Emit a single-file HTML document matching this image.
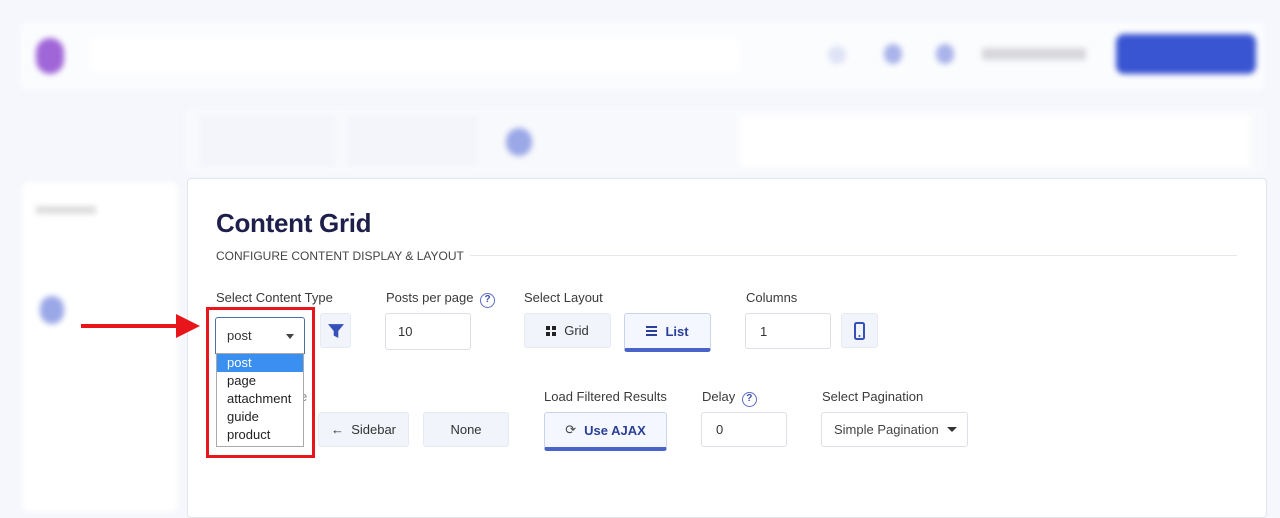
<!DOCTYPE html>
<html><head><meta charset="utf-8"><style>
*{box-sizing:border-box;margin:0;padding:0}
body{width:1280px;height:508px;overflow:hidden;background:#f5f7fc;font-family:"Liberation Sans",sans-serif;color:#333;position:relative}
.abs{position:absolute}
.blur{filter:blur(3px)}
.card{background:#fff;border-radius:6px}
.lbl{position:absolute;font-size:13px;color:#3a3a3a}
.btn{position:absolute;background:#f1f4fb;border:1px solid #e6eaf3;border-radius:3px;font-size:13px;color:#333;display:flex;align-items:center;justify-content:center;gap:8px}
.inp{position:absolute;background:#fff;border:1px solid #dcdfe6;border-radius:3px;font-size:13px;color:#333;padding-left:14px;display:flex;align-items:center}
.act{background:#f4f7ff;border:1px solid #c9d3ec;border-bottom:4px solid #4a63c8;color:#2b3f96;font-weight:bold}
</style></head><body>
<div class="abs blur" style="left:0;top:0;width:1280px;height:508px">
 <div class="abs card" style="left:20px;top:22px;width:1245px;height:68px;background:#fbfcfe"></div>
 <div class="abs card" style="left:90px;top:38px;width:650px;height:34px"></div>
 <div class="abs" style="left:36px;top:38px;width:28px;height:36px;border-radius:14px;background:#a066d8"></div>
 <div class="abs" style="left:828px;top:46px;width:18px;height:18px;border-radius:9px;background:#dfe3f6"></div>
 <div class="abs" style="left:884px;top:44px;width:18px;height:20px;border-radius:9px;background:#aab4ea"></div>
 <div class="abs" style="left:936px;top:44px;width:18px;height:20px;border-radius:9px;background:#aab4ea"></div>
 <div class="abs" style="left:982px;top:48px;width:104px;height:12px;background:#d8d8dc"></div>
 <div class="abs" style="left:1116px;top:34px;width:140px;height:40px;border-radius:8px;background:#3a55d2"></div>
 <div class="abs card" style="left:185px;top:108px;width:1080px;height:66px;background:#f8f9fc"></div>
 <div class="abs" style="left:200px;top:115px;width:135px;height:52px;background:#f3f5fa"></div>
 <div class="abs" style="left:348px;top:115px;width:130px;height:52px;background:#f3f5fa"></div>
 <div class="abs" style="left:506px;top:128px;width:26px;height:28px;border-radius:13px;background:#9aa8e8"></div>
 <div class="abs" style="left:740px;top:115px;width:510px;height:52px;background:#fff"></div>
 <div class="abs card" style="left:22px;top:182px;width:156px;height:330px"></div>
 <div class="abs" style="left:36px;top:206px;width:60px;height:8px;background:#ddd"></div>
 <div class="abs" style="left:40px;top:296px;width:24px;height:28px;border-radius:12px;background:#9aa8e8"></div>
</div>
<div class="abs" style="left:187px;top:178px;width:1080px;height:340px;background:#fff;border:1px solid #e3e5ee;border-radius:4px"></div>
<div class="abs" style="left:216px;top:208px;font-size:26px;font-weight:bold;color:#1e1f4b;letter-spacing:-0.3px">Content Grid</div>
<div class="abs" style="left:216px;top:249px;font-size:12px;color:#444">CONFIGURE CONTENT DISPLAY &amp; LAYOUT</div>
<div class="abs" style="left:470px;top:255px;width:767px;height:1px;background:#e5e7ec"></div>

<div class="lbl" style="left:216px;top:290px">Select Content Type</div>
<div class="lbl" style="left:386px;top:290px">Posts per page <span style="display:inline-block;width:15px;height:15px;border:1.5px solid #5a6cc8;border-radius:50%;color:#3b4ea8;font-size:10px;text-align:center;line-height:12px;font-weight:bold;margin-left:3px">?</span></div>
<div class="lbl" style="left:524px;top:290px">Select Layout</div>
<div class="lbl" style="left:746px;top:290px">Columns</div>

<div class="inp" style="left:215px;top:317px;width:90px;height:37px;border-color:#4f6fa8;border-radius:3px 3px 0 0;padding-left:11px">post<span style="position:absolute;right:10px;top:16px;border:4px solid transparent;border-top:5px solid #444"></span></div>
<div class="btn" style="left:320px;top:313px;width:31px;height:35px"><svg width="16" height="16" viewBox="0 0 14 14"><path d="M0 1h14l-5 6v6l-4-2V7z" fill="#3550b8"/></svg></div>
<div class="inp" style="left:385px;top:313px;width:86px;height:37px;padding-left:12px">10</div>
<div class="btn" style="left:524px;top:313px;width:87px;height:35px"><svg width="10" height="10"><rect x="0" y="0" width="4" height="4" fill="#222"/><rect x="6" y="0" width="4" height="4" fill="#222"/><rect x="0" y="6" width="4" height="4" fill="#222"/><rect x="6" y="6" width="4" height="4" fill="#222"/></svg>Grid</div>
<div class="btn act" style="left:624px;top:313px;width:87px;height:39px"><svg width="11" height="10"><rect y="0" width="11" height="2" fill="#2b3f96"/><rect y="4" width="11" height="2" fill="#2b3f96"/><rect y="8" width="11" height="2" fill="#2b3f96"/></svg>List</div>
<div class="inp" style="left:745px;top:313px;width:86px;height:36px">1</div>
<div class="btn" style="left:841px;top:313px;width:37px;height:35px"><svg width="11" height="18" viewBox="0 0 11 18"><rect x="1" y="1" width="9" height="16" rx="1.5" fill="none" stroke="#3550b8" stroke-width="2"/><circle cx="5.5" cy="14" r="1" fill="#3550b8"/></svg></div>

<div class="lbl" style="left:300px;top:389px;color:#888">e .</div>
<div class="lbl" style="left:544px;top:389px">Load Filtered Results</div>
<div class="lbl" style="left:702px;top:389px">Delay <span style="display:inline-block;width:15px;height:15px;border:1.5px solid #5a6cc8;border-radius:50%;color:#3b4ea8;font-size:10px;text-align:center;line-height:12px;font-weight:bold;margin-left:3px">?</span></div>
<div class="lbl" style="left:822px;top:389px">Select Pagination</div>

<div class="btn" style="left:318px;top:412px;width:91px;height:35px">&#8592;&nbsp;&nbsp;Sidebar</div>
<div class="btn" style="left:423px;top:412px;width:86px;height:35px">None</div>
<div class="btn act" style="left:544px;top:412px;width:123px;height:39px"><span style="font-weight:normal;color:#444">&#10227;</span>Use AJAX</div>
<div class="inp" style="left:701px;top:412px;width:86px;height:35px">0</div>
<div class="inp" style="left:821px;top:412px;width:147px;height:35px;padding-left:12px;color:#444">Simple Pagination<span style="position:absolute;right:10px;top:14px;border:5px solid transparent;border-top:5px solid #333"></span></div>

<div class="abs" style="left:216px;top:353px;width:88px;height:94px;background:#fff;border:1px solid #aaa;font-size:13px;line-height:18px;color:#222">
 <div style="background:#3b8ff0;color:#fff;padding-left:10px">post</div>
 <div style="padding-left:10px">page</div>
 <div style="padding-left:10px">attachment</div>
 <div style="padding-left:10px">guide</div>
 <div style="padding-left:10px">product</div>
</div>
<div class="abs" style="left:206px;top:307px;width:109px;height:151px;border:3px solid #e8161b"></div>
<div class="abs" style="left:81px;top:324px;width:100px;height:4px;background:#e8161b"></div>
<div class="abs" style="left:176px;top:314px;width:0;height:0;border-top:12px solid transparent;border-bottom:12px solid transparent;border-left:24px solid #e8161b"></div>
</body></html>
